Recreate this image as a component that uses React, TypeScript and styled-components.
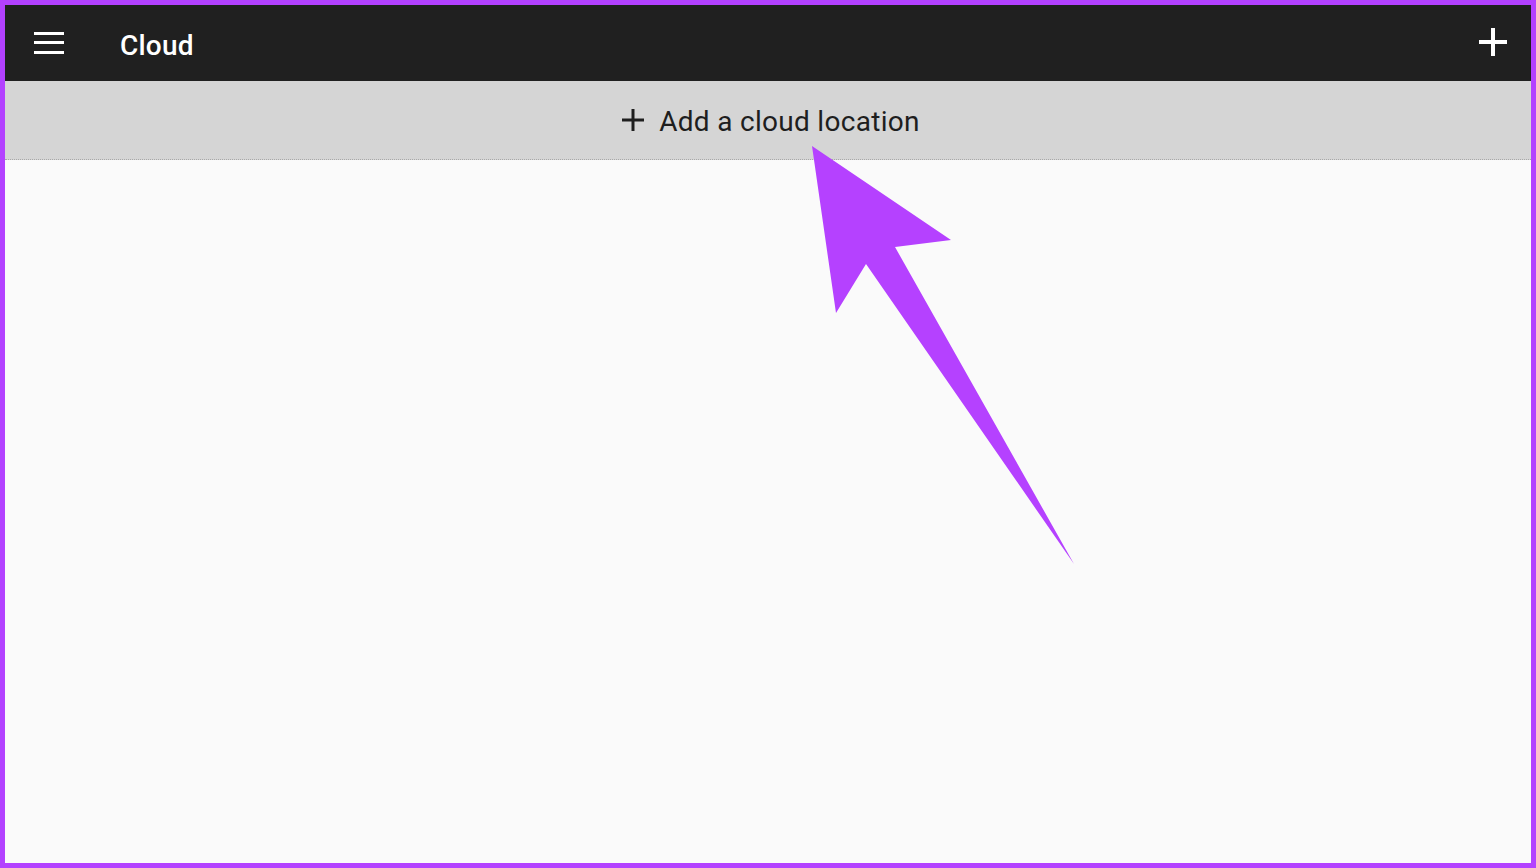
import styled, { createGlobalStyle } from "styled-components";

const GlobalStyle = createGlobalStyle`
  html, body {
    margin: 0;
    padding: 0;
    height: 100%;
  }
  body {
    font-family: Roboto, "Liberation Sans", sans-serif;
    background: #b341ff;
  }
`;

export default function App() {
  return (
    <>
      <GlobalStyle />
      <Frame>
        <TopBar>
          <MenuButton aria-label="menu">
            <span />
            <span />
            <span />
          </MenuButton>
          <Title>Cloud</Title>
          <AddButton aria-label="add">
            <PlusIcon size={28} stroke={4} color="#ffffff" />
          </AddButton>
        </TopBar>
        <AddLocationBar>
          <PlusIcon size={22} stroke={3} color="#1e1e1e" />
          <AddLabel>Add a cloud location</AddLabel>
        </AddLocationBar>
        <Content />
        <Pointer viewBox="0 0 1536 868" aria-hidden>
          <polygon
            points="812,146 951,240 895,247 1074,564 866,264 836,313"
            fill="#b541ff"
          />
        </Pointer>
      </Frame>
    </>
  );
}

function PlusIcon({
  size,
  stroke,
  color,
}: {
  size: number;
  stroke: number;
  color: string;
}) {
  const mid = size / 2;
  return (
    <svg width={size} height={size} viewBox={`0 0 ${size} ${size}`}>
      <line x1={mid} y1={0} x2={mid} y2={size} stroke={color} strokeWidth={stroke} />
      <line x1={0} y1={mid} x2={size} y2={mid} stroke={color} strokeWidth={stroke} />
    </svg>
  );
}

const Frame = styled.div`
  position: relative;
  box-sizing: border-box;
  height: 868px;
  border: 5px solid #b341ff;
  display: flex;
  flex-direction: column;
  background: #fafafa;
  overflow: hidden;
`;

const TopBar = styled.header`
  height: 76px;
  flex-shrink: 0;
  background: #202020;
  display: flex;
  align-items: center;
  padding: 0 24px 0 29px;
`;

const MenuButton = styled.div`
  width: 30px;
  height: 22px;
  display: flex;
  flex-direction: column;
  justify-content: space-between;
  margin-top: -1px;

  span {
    display: block;
    height: 3px;
    background: #ffffff;
  }
`;

const Title = styled.h1`
  margin: 4px 0 0 56px;
  color: #ffffff;
  font-size: 28px;
  font-weight: 500;
  letter-spacing: 0.2px;
`;

const AddButton = styled.div`
  margin-left: auto;
  display: flex;
  align-items: center;
  margin-top: -2px;
`;

const AddLocationBar = styled.div`
  height: 78px;
  flex-shrink: 0;
  background: #d5d5d5;
  border-bottom: 1px dotted #a8a8a8;
  display: flex;
  align-items: center;
  justify-content: center;
  gap: 15px;
  padding-left: 6px;
`;

const AddLabel = styled.span`
  margin-top: 3px;
  color: #1e1e1e;
  font-size: 28px;
  font-weight: 400;
  letter-spacing: 0.3px;
`;

const Content = styled.main`
  flex: 1;
  background: #fafafa;
`;

const Pointer = styled.svg`
  position: absolute;
  left: -5px;
  top: -5px;
  width: 1536px;
  height: 868px;
  pointer-events: none;
`;
